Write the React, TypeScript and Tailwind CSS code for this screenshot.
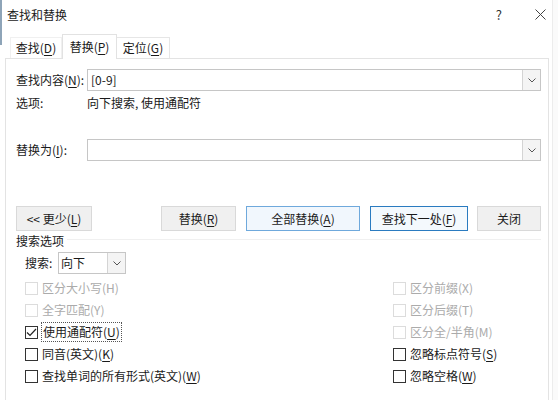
import React from 'react';

const font = { fontFamily: '"Noto Sans CJK SC", "Noto Sans", sans-serif' };

const Chevron = () => (
  <svg width="8" height="5" viewBox="0 0 8 5" fill="none">
    <path d="M0.5 0.5 L4 4 L7.5 0.5" stroke="#555" strokeWidth="1" />
  </svg>
);

const ComboBox = ({ value }: { value?: string }) => (
  <div className="flex h-[22px] flex-1 border border-[#c6c6c6] bg-white">
    <div className="flex flex-1 items-center pl-[3px] text-[12px] text-[#1a1a1a]">{value}</div>
    <div className="flex w-[18px] items-center justify-center border-l border-[#d4d4d4] bg-[#f4f4f4]">
      <Chevron />
    </div>
  </div>
);

type BtnProps = { label: React.ReactNode; w: string; variant?: 'plain' | 'hover' | 'default' };

const Button = ({ label, w, variant = 'plain' }: BtnProps) => {
  const cls =
    variant === 'default'
      ? 'border-[#2a7bc0] bg-[#f4f9fd]'
      : variant === 'hover'
        ? 'border-[#6fa9dc] bg-[#f1f7fd]'
        : 'border-[#d9d9d9] bg-[#f0f0f0]';
  return (
    <div className={`flex h-[25px] items-center justify-center border text-[12px] text-[#1a1a1a] ${cls} ${w}`}>
      {label}
    </div>
  );
};

const U = ({ children }: { children: React.ReactNode }) => <span className="underline underline-offset-2">{children}</span>;

type CheckProps = { label: React.ReactNode; disabled?: boolean; checked?: boolean; focus?: boolean };

const Check = ({ label, disabled, checked, focus }: CheckProps) => (
  <div className="flex h-[22px] items-center gap-[4px]">
    <div
      className={`flex h-[13px] w-[13px] items-center justify-center border bg-white ${
        disabled ? 'border-[#dcdcdc]' : 'border-[#333]'
      }`}
    >
      {checked && (
        <svg width="11" height="9" viewBox="0 0 11 9" fill="none">
          <path d="M1 4.5 L4 7.5 L10 1" stroke="#222" strokeWidth="1.2" />
        </svg>
      )}
    </div>
    <span
      className={`text-[12px] ${disabled ? 'text-[#ababab]' : 'text-[#1a1a1a]'} ${
        focus ? 'outline outline-1 outline-dotted outline-[#555] px-[1px]' : ''
      }`}
    >
      {label}
    </span>
  </div>
);

export default function App() {
  return (
    <div className="relative h-[400px] w-[558px] overflow-hidden bg-white text-[#1a1a1a]" style={font}>
      <div className="absolute left-0 top-0 h-[45px] w-[2px] bg-[#8ea4b8]" />
      <div className="absolute right-0 top-0 h-[400px] w-[6px] border-l border-[#ececec] bg-[#fafafa]" />

      {/* title bar */}
      <div className="flex h-[29px] items-center pl-[7px] pr-[12px]">
        <span className="text-[12px]">查找和替换</span>
        <div className="ml-auto flex items-center gap-[33px]">
          <span className="text-[13px] text-[#333]">?</span>
          <svg width="11" height="11" viewBox="0 0 11 11">
            <path d="M0.5 0.5 L10.5 10.5 M10.5 0.5 L0.5 10.5" stroke="#444" strokeWidth="1" />
          </svg>
        </div>
      </div>

      {/* tabs */}
      <div className="ml-[10px] mt-[4px] flex h-[25px] items-end">
        <div className="flex h-[21px] w-[52px] items-center justify-center border border-b-0 border-[#f0f0f0] text-[12px]">
          查找(<U>D</U>)
        </div>
        <div className="relative z-10 -mb-px flex h-[25px] w-[55px] items-center justify-center border border-b-0 border-[#e2e2e2] bg-white text-[12px]">
          替换(<U>P</U>)
        </div>
        <div className="flex h-[21px] w-[53px] items-center justify-center border border-b-0 border-l-0 border-[#e6e6e6] text-[12px]">
          定位(<U>G</U>)
        </div>
      </div>

      {/* panel */}
      <div className="ml-[5px] mr-[9px] flex h-[350px] flex-col border border-b-0 border-[#e3e3e3] pl-[10px] pr-[7px] pt-[10px]">
        <div className="flex items-center">
          <span className="w-[71px] text-[12px]">
            查找内容(<U>N</U>):
          </span>
          <ComboBox value="[0-9]" />
        </div>
        <div className="mt-[3px] flex h-[18px] items-center">
          <span className="w-[71px] text-[12px]">选项:</span>
          <span className="text-[12px]">向下搜索, 使用通配符</span>
        </div>

        <div className="mt-[27px] flex items-center">
          <span className="w-[71px] text-[12px]">
            替换为(<U>I</U>):
          </span>
          <ComboBox />
        </div>

        <div className="mt-[45px] flex items-center">
          <Button w="w-[76px]" label={<>&lt;&lt; 更少(<U>L</U>)</>} />
          <div className="ml-auto flex">
            <Button w="w-[75px]" label={<>替换(<U>R</U>)</>} />
            <div className="w-[10px]" />
            <Button w="w-[114px]" variant="hover" label={<>全部替换(<U>A</U>)</>} />
            <div className="w-[10px]" />
            <Button w="w-[98px]" variant="default" label={<>查找下一处(<U>F</U>)</>} />
            <div className="w-[9px]" />
            <Button w="w-[64px]" label="关闭" />
          </div>
        </div>

        <div className="mt-[1px] flex items-center">
          <span className="text-[12px]">搜索选项</span>
          <div className="ml-[3px] mt-[-4px] h-px flex-1 bg-[#f0f0f0]" />
        </div>

        <div className="ml-[9px] mt-[2px] flex items-center">
          <span className="w-[33px] text-[12px]">搜索:</span>
          <div className="flex h-[22px] w-[68px] border border-[#c6c6c6] bg-white">
            <div className="flex flex-1 items-center pl-[2px] text-[12px]">向下</div>
            <div className="flex w-[18px] items-center justify-center border-l border-[#d4d4d4] bg-[#f4f4f4]">
              <Chevron />
            </div>
          </div>
        </div>

        <div className="ml-[9px] mt-[3px] flex">
          <div className="flex w-[368px] flex-col">
            <Check disabled label="区分大小写(H)" />
            <Check disabled label="全字匹配(Y)" />
            <Check checked focus label={<>使用通配符(<U>U</U>)</>} />
            <Check label={<>同音(英文)(<U>K</U>)</>} />
            <Check label={<>查找单词的所有形式(英文)(<U>W</U>)</>} />
          </div>
          <div className="flex flex-col">
            <Check disabled label="区分前缀(X)" />
            <Check disabled label="区分后缀(T)" />
            <Check disabled label="区分全/半角(M)" />
            <Check label={<>忽略标点符号(<U>S</U>)</>} />
            <Check label={<>忽略空格(<U>W</U>)</>} />
          </div>
        </div>
      </div>
    </div>
  );
}
